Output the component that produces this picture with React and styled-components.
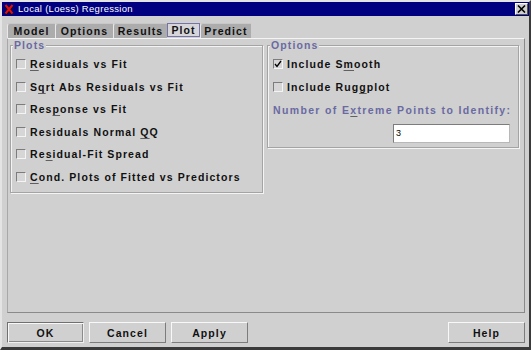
import React from 'react';
import styled, { createGlobalStyle } from 'styled-components';

const Global = createGlobalStyle`
  html, body { margin: 0; padding: 0; background: #d0d0d0; }
  body { width: 531px; height: 350px; overflow: hidden; font-family: "Liberation Sans", Arial, sans-serif; }
`;

const Window = styled.div`
  box-sizing: border-box;
  width: 531px;
  height: 350px;
  background: #d0d0d0;
  border-top: 2px solid #e4e4e4;
  border-left: 2px solid #e4e4e4;
  border-right: 2px solid #3a3a3a;
  border-bottom: 3px solid #3a3a3a;
  display: flex;
  flex-direction: column;
`;

const TitleBar = styled.div`
  height: 14px;
  background: #000080;
  display: flex;
  align-items: center;
  padding: 0 1px 0 2px;
  gap: 4px;
`;

const Title = styled.span`
  color: #ffffff;
  font-size: 9.5px;
  letter-spacing: 0.3px;
  line-height: 14px;
  flex: 1;
  white-space: nowrap;
`;

const CloseBox = styled.div`
  width: 13px;
  height: 12px;
  box-sizing: border-box;
  background: #d0d0d0;
  border-top: 1px solid #ffffff;
  border-left: 1px solid #ffffff;
  border-right: 1px solid #505050;
  border-bottom: 1px solid #505050;
  display: flex;
  align-items: center;
  justify-content: center;
`;

const TabRow = styled.div`
  display: flex;
  align-items: flex-end;
  margin-top: 7px;
  padding-left: 5px;
  height: 15px;
`;

const Tab = styled.div`
  box-sizing: border-box;
  height: ${p => (p.$active ? 14 : 15)}px;
  margin-bottom: ${p => (p.$active ? 1 : 0)}px;
  width: ${p => p.$w}px;
  display: flex;
  align-items: center;
  justify-content: center;
  font-weight: bold;
  font-size: 10.5px;
  letter-spacing: 1.1px;
  color: #101010;
  background: ${p => (p.$active ? '#d6d6da' : '#acacac')};
  border: ${p => (p.$active ? '1px solid #7474a8' : 'none')};
  border-left: ${p => (p.$active ? '1px solid #7474a8' : '1px solid #e8e8e8')};
  border-top: ${p => (p.$active ? '1px solid #7474a8' : '1px solid #c8c8c8')};
  border-top-left-radius: ${p => (p.$active ? 0 : 3)}px;
  white-space: nowrap;
`;

const Panel = styled.div`
  box-sizing: border-box;
  margin-left: 5px;
  width: 518px;
  height: 275px;
  border-top: 1px solid #f4f4f4;
  border-left: 1px solid #a8a8a8;
  border-right: 1px solid #8a8a8a;
  border-bottom: 1px solid #8a8a8a;
  padding: 6px 0 0 2px;
  display: grid;
  grid-template-columns: 253px 252px;
  column-gap: 4px;
  align-items: start;
`;

const GroupBox = styled.div`
  box-sizing: border-box;
  height: ${p => p.$h}px;
  border: 1px solid #a4a4a4;
  box-shadow: inset 1px 1px 0 #f4f4f4, 1px 1px 0 #f4f4f4;
  display: flex;
  flex-direction: column;
`;

const Legend = styled.div`
  align-self: flex-start;
  margin: -7px 0 0 2px;
  padding: 0 1px;
  height: 12px;
  line-height: 12px;
  background: #d0d0d0;
  color: #6a6aa2;
  font-weight: bold;
  font-size: 10.5px;
  letter-spacing: 1.1px;
`;

const List = styled.div`
  display: flex;
  flex-direction: column;
  padding: 2px 0 0 5px;
`;

const Row = styled.div`
  height: 22.5px;
  display: flex;
  align-items: center;
  gap: 4px;
`;

const Box = styled.div`
  box-sizing: border-box;
  width: 10px;
  height: 10px;
  flex: none;
  background: #d6d6d6;
  border-top: 1px solid #7c7c7c;
  border-left: 1px solid #7c7c7c;
  border-right: 1px solid #f4f4f4;
  border-bottom: 1px solid #f4f4f4;
  display: flex;
  align-items: center;
  justify-content: center;
`;

const Label = styled.span`
  font-weight: bold;
  font-size: 10.5px;
  letter-spacing: ${p => p.$ls || 1.1}px;
  color: ${p => p.$color || '#101010'};
  white-space: nowrap;
`;

const U = styled.span`
  text-decoration: underline;
  text-underline-offset: 2px;
  text-decoration-color: #606060;
`;

const FieldLabel = styled.div`
  height: 22.5px;
  display: flex;
  align-items: center;
  margin-top: 1px;
`;

const InputRow = styled.div`
  display: flex;
  justify-content: flex-end;
  padding-right: 8px;
  margin-top: 2px;
`;

const Input = styled.div`
  box-sizing: border-box;
  width: 117px;
  height: 19px;
  background: #ffffff;
  border-top: 1px solid #7c7c7c;
  border-left: 1px solid #7c7c7c;
  border-right: 1px solid #b8b8b8;
  border-bottom: 1px solid #b8b8b8;
  font-size: 9px;
  line-height: 17px;
  padding-left: 2px;
  color: #000;
`;

const ButtonRow = styled.div`
  display: flex;
  gap: 5px;
  margin: 9px 0 0 5px;
  width: 518px;
`;

const Spacer = styled.div`
  flex: 1;
`;

const Button = styled.div`
  box-sizing: border-box;
  width: 77px;
  height: 21px;
  display: flex;
  align-items: center;
  justify-content: center;
  font-weight: bold;
  font-size: 10.5px;
  letter-spacing: 1.1px;
  color: #101010;
  background: #d0d0d0;
  border-top: 1px solid ${p => (p.$default ? '#707070' : '#f8f8f8')};
  border-left: 1px solid ${p => (p.$default ? '#707070' : '#f8f8f8')};
  border-right: 1px solid ${p => (p.$default ? '#f0f0f0' : '#7c7c7c')};
  border-bottom: 1px solid ${p => (p.$default ? '#f0f0f0' : '#7c7c7c')};
  box-shadow: ${p => (p.$default ? 'inset 1px 1px 0 #f8f8f8, inset -1px -1px 0 #8a8a8a' : 'none')};
`;

const CheckMark = () => (
  <svg width="8" height="8" viewBox="0 0 8 8">
    <polyline points="1,4 3,6.5 7,1" fill="none" stroke="#000" strokeWidth="1.3" />
  </svg>
);

const Check = ({ checked, children }) => (
  <Row>
    <Box>{checked && <CheckMark />}</Box>
    <Label>{children}</Label>
  </Row>
);

const tabs = [
  { name: 'Model', w: 48 },
  { name: 'Options', w: 58 },
  { name: 'Results', w: 54 },
  { name: 'Plot', w: 33, active: true },
  { name: 'Predict', w: 51 },
];

export default function App() {
  return (
    <>
      <Global />
      <Window>
        <TitleBar>
          <svg width="10" height="11" viewBox="0 0 10 11">
            <path d="M1.5 1.5 L8.5 10 M8.5 1.5 L1.5 10" stroke="#200000" strokeWidth="3" />
            <path d="M1.5 1 L8.5 9.5 M8.5 1 L1.5 9.5" stroke="#e01010" strokeWidth="2" />
          </svg>
          <Title>Local (Loess) Regression</Title>
          <CloseBox>
            <svg width="9" height="8" viewBox="0 0 9 8">
              <path d="M1 0.5 L8 7.5 M8 0.5 L1 7.5" stroke="#000" strokeWidth="1.6" />
            </svg>
          </CloseBox>
        </TitleBar>
        <TabRow>
          {tabs.map(t => (
            <Tab key={t.name} $w={t.w} $active={t.active}>{t.name}</Tab>
          ))}
        </TabRow>
        <Panel>
          <GroupBox $h={148}>
            <Legend>Plots</Legend>
            <List>
              <Check><U>R</U>esiduals vs Fit</Check>
              <Check>S<U>q</U>rt Abs Residuals vs Fit</Check>
              <Check>Res<U>p</U>onse vs Fit</Check>
              <Check>Residuals Normal <U>Q</U>Q</Check>
              <Check>Re<U>s</U>idual-Fit Spread</Check>
              <Check><U>C</U>ond. Plots of Fitted vs Predictors</Check>
            </List>
          </GroupBox>
          <GroupBox $h={103}>
            <Legend>Options</Legend>
            <List>
              <Check checked>Include S<U>m</U>ooth</Check>
              <Check>Include Rug<U>g</U>plot</Check>
              <FieldLabel>
                <Label $color="#6a6aa2" $ls={1.35}>Number of E<U>x</U>treme Points to Identify:</Label>
              </FieldLabel>
            </List>
            <InputRow>
              <Input>3</Input>
            </InputRow>
          </GroupBox>
        </Panel>
        <ButtonRow>
          <Button $default>OK</Button>
          <Button>Cancel</Button>
          <Button>Apply</Button>
          <Spacer />
          <Button>Help</Button>
        </ButtonRow>
      </Window>
    </>
  );
}
